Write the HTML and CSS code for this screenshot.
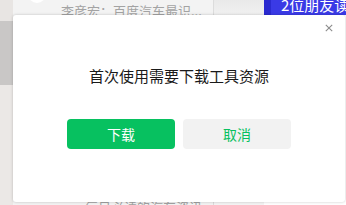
FILE: index.html
```html
<!DOCTYPE html>
<html lang="zh-CN">
<head>
<meta charset="utf-8">
<title>下载工具资源</title>
<link rel="stylesheet" href="styles.css">
</head>
<body>
<div class="page">
  <aside class="side">
    <div class="side-top"></div>
    <div class="side-block"></div>
  </aside>
  <main class="feed">
    <div class="feed-item">
      <div class="avatar"></div>
      <div class="summary">李彦宏：百度汽车最识...</div>
    </div>
    <div class="feed-spacer"></div>
    <div class="feed-item feed-bottom">
      <div class="summary">每日必读的汽车资讯</div>
    </div>
  </main>
  <div class="rail"></div>
  <div class="right">
    <div class="banner">
      <span class="chev"></span>
      <span class="banner-text">2位朋友读过</span>
    </div>
  </div>
</div>

<div class="modal" role="dialog">
  <svg class="close" width="8" height="8" viewBox="0 0 8 8" aria-label="关闭">
    <path d="M0.8 0.8 L7.2 7.2 M7.2 0.8 L0.8 7.2" stroke="#8c8c8c" stroke-width="1.1" fill="none"/>
  </svg>
  <p class="title">首次使用需要下载工具资源</p>
  <div class="actions">
    <button class="btn btn-primary">下载</button>
    <button class="btn btn-default">取消</button>
  </div>
</div>
</body>
</html>
```

FILE: styles.css
```css
* { box-sizing: border-box; }
html, body {
  margin: 0;
  padding: 0;
  width: 346px;
  height: 205px;
  overflow: hidden;
  background: #ffffff;
  font-family: "Noto Sans CJK SC", "Noto Sans", sans-serif;
}
.page {
  display: flex;
  width: 346px;
  height: 205px;
}
.side {
  width: 13px;
  flex: none;
  background: #ebe8e6;
  display: flex;
  flex-direction: column;
}
.side-top {
  height: 21px;
  background: #e8e5e3;
}
.side-block {
  height: 64px;
  background: #c9c7c6;
}
.feed {
  width: 200px;
  flex: none;
  background: #f3f3f3;
  display: flex;
  flex-direction: column;
  overflow: hidden;
}
.feed-item {
  display: flex;
  align-items: flex-start;
  padding-left: 15px;
  height: 17px;
}
.avatar {
  width: 18px;
  height: 18px;
  margin-top: -15px;
  border-radius: 50%;
  background: #ffffff;
  flex: none;
}
.summary {
  margin-left: 15px;
  margin-top: 3px;
  font-size: 13px;
  line-height: 15px;
  color: #a3a3a3;
  white-space: nowrap;
}
.feed-spacer { flex: 1; }
.feed-bottom {
  height: 6px;
  padding-left: 57px;
}
.feed-bottom .summary { margin-left: 15px; margin-top: 0; }
.rail {
  width: 51px;
  flex: none;
  border-left: 1px solid #dcdcdc;
  background: linear-gradient(#e9e9e9, #f1f1f1 15px, #f4f4f4);
}
.right {
  flex: 1;
  background: #ffffff;
}
.banner {
  height: 15px;
  background: #3a3ae6;
  display: flex;
  align-items: flex-start;
  overflow: hidden;
}
.chev {
  width: 7px;
  height: 15px;
  background: #2a2ad0;
  flex: none;
}
.banner-text {
  margin-left: 10px;
  margin-top: -4px;
  font-size: 15px;
  line-height: 18px;
  color: #ffffff;
  white-space: nowrap;
}
.modal {
  position: absolute;
  left: 13px;
  top: 15px;
  width: 332px;
  height: 187px;
  background: #ffffff;
  border-radius: 3px;
  box-shadow: 0 0 3px rgba(0, 0, 0, 0.22);
  display: flex;
  flex-direction: column;
  align-items: center;
  padding-top: 51px;
}
.close {
  position: absolute;
  left: 312px;
  top: 9px;
}
.title {
  margin: 0;
  font-size: 15px;
  line-height: 20px;
  color: #1a1a1a;
}
.actions {
  display: flex;
  gap: 8px;
  margin-top: 33px;
}
.btn {
  width: 108px;
  height: 30px;
  border: none;
  border-radius: 4px;
  font-family: "Noto Sans CJK SC", "Noto Sans", sans-serif;
  font-size: 14px;
  line-height: 30px;
  padding: 0;
}
.btn-primary {
  background: #07c160;
  color: #ffffff;
}
.btn-default {
  background: #f2f2f2;
  color: #07c160;
}
```
